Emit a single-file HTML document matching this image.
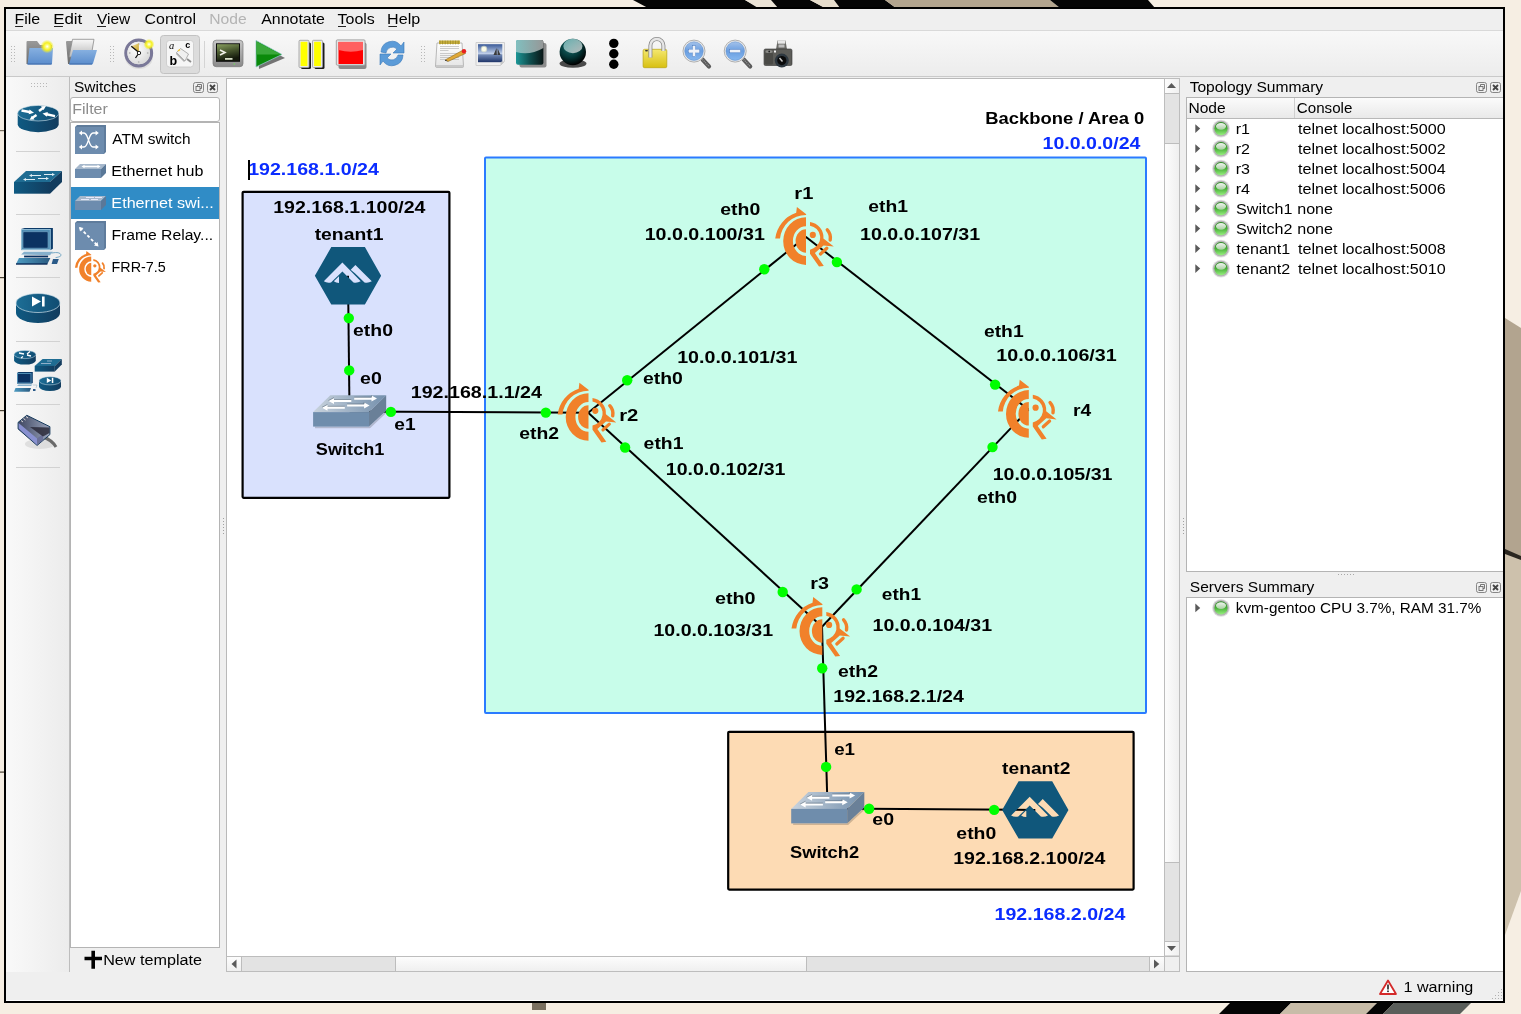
<!DOCTYPE html><html><head><meta charset="utf-8"><style>
html,body{margin:0;padding:0;background:#f6eee3;overflow:hidden;}
svg{display:block;font-family:"Liberation Sans",sans-serif;will-change:transform;}
</style></head><body>
<svg width="1521" height="1014" viewBox="0 0 1521 1014">
<defs>
<linearGradient id="gTool" x1="0" y1="0" x2="0" y2="1"><stop offset="0" stop-color="#f8f8f8"/><stop offset="1" stop-color="#ececec"/></linearGradient>
<linearGradient id="gLeft" x1="0" y1="0" x2="1" y2="0"><stop offset="0" stop-color="#f9f9f9"/><stop offset="1" stop-color="#ececec"/></linearGradient>
<linearGradient id="gHdr" x1="0" y1="0" x2="0" y2="1"><stop offset="0" stop-color="#fbfbfb"/><stop offset="1" stop-color="#e9e9e9"/></linearGradient>
<linearGradient id="gHandleV" x1="0" y1="0" x2="1" y2="0"><stop offset="0" stop-color="#fdfdfd"/><stop offset="1" stop-color="#efefef"/></linearGradient>
<linearGradient id="gHandleH" x1="0" y1="0" x2="0" y2="1"><stop offset="0" stop-color="#fdfdfd"/><stop offset="1" stop-color="#efefef"/></linearGradient>
<linearGradient id="gLed2" x1="0" y1="0" x2="0" y2="1"><stop offset="0" stop-color="#2a8a20"/><stop offset="0.5" stop-color="#48b038"/><stop offset="1" stop-color="#98f080"/></linearGradient><linearGradient id="gLedHi" x1="0" y1="0" x2="0" y2="1"><stop offset="0" stop-color="#f0f4f0"/><stop offset="1" stop-color="#a8d0a0"/></linearGradient>
<linearGradient id="gSwTop" x1="0" y1="0" x2="1" y2="0"><stop offset="0" stop-color="#c9d3dd"/><stop offset="1" stop-color="#7490ad"/></linearGradient>
</defs>
<rect x="0" y="0" width="1521" height="1014" fill="#f6eee3"/>
<polygon points="633,0 745,0 760,8 648,8" fill="#050505"/>
<polygon points="745,0 771,0 778,8 758,8" fill="#ebe3d6"/>
<polygon points="771,0 810,0 825,8 778,8" fill="#050505"/>
<polygon points="810,0 834,0 840,8 825,8" fill="#e6dccb"/>
<polygon points="834,0 885,0 896,8 840,8" fill="#050505"/>
<polygon points="885,0 1050,0 1060,8 896,8" fill="#b3a58e"/>
<polygon points="1050,0 1148,0 1155,8 1060,8" fill="#050505"/>
<polygon points="1505,318 1521,328 1521,558 1505,551" fill="#b2a48f"/>
<polygon points="1505,551 1521,558 1521,891 1505,935" fill="#cdc1ac"/>
<polygon points="1505,549 1521,556 1521,560 1505,554" fill="#2a2620"/>
<polygon points="1230,1003 1291,1003 1280,1014 1219,1014" fill="#050505"/>
<polygon points="1291,1003 1377,1003 1366,1014 1280,1014" fill="#c8bca8"/>
<polygon points="1377,1003 1394,1003 1383,1014 1366,1014" fill="#050505"/>
<polygon points="1394,1003 1471,1003 1460,1014 1383,1014" fill="#5a5e5a"/>
<rect x="532" y="1003" width="14" height="7" fill="#7a7060"/>
<rect x="0" y="130" width="4" height="1.2" fill="#7a7062"/>
<rect x="0" y="277" width="4" height="1.2" fill="#4a4234"/>
<rect x="0" y="410" width="4" height="1.2" fill="#4a4234"/>
<rect x="0" y="771.5" width="4" height="1.2" fill="#4a4234"/>
<rect x="4" y="7" width="1501" height="996" fill="#000"/>
<rect x="6" y="9" width="1497" height="992" fill="#efefef"/>
<rect x="6" y="9" width="1497" height="21" fill="#efefef"/>
<rect x="6" y="30" width="1497" height="1" fill="#d9d9d9"/>
<text x="14.49" y="24.30" font-size="15.0" font-weight="normal" fill="#000" textLength="25.72" lengthAdjust="spacingAndGlyphs" >File</text>
<text x="53.21" y="24.30" font-size="15.0" font-weight="normal" fill="#000" textLength="29.11" lengthAdjust="spacingAndGlyphs" >Edit</text>
<text x="97.03" y="24.30" font-size="15.0" font-weight="normal" fill="#000" textLength="33.23" lengthAdjust="spacingAndGlyphs" >View</text>
<text x="144.59" y="24.30" font-size="15.0" font-weight="normal" fill="#000" textLength="51.48" lengthAdjust="spacingAndGlyphs" >Control</text>
<text x="209.21" y="24.30" font-size="15.0" font-weight="normal" fill="#b4b4b4" textLength="37.48" lengthAdjust="spacingAndGlyphs" >Node</text>
<text x="261.17" y="24.30" font-size="15.0" font-weight="normal" fill="#000" textLength="63.84" lengthAdjust="spacingAndGlyphs" >Annotate</text>
<text x="337.54" y="24.30" font-size="15.0" font-weight="normal" fill="#000" textLength="37.34" lengthAdjust="spacingAndGlyphs" >Tools</text>
<text x="387.08" y="24.30" font-size="15.0" font-weight="normal" fill="#000" textLength="33.10" lengthAdjust="spacingAndGlyphs" >Help</text>
<rect x="15.1" y="26" width="7.9" height="1" fill="#222"/>
<rect x="54" y="26" width="8.9" height="1" fill="#222"/>
<rect x="97" y="26" width="9.0" height="1" fill="#222"/>
<rect x="338" y="26" width="8.0" height="1" fill="#222"/>
<rect x="388.4" y="26" width="8.6" height="1" fill="#222"/>
<rect x="6" y="31" width="1497" height="45" fill="url(#gTool)"/>
<rect x="6" y="76" width="1497" height="1" fill="#c9c9c9"/>
<rect x="11" y="46" width="1" height="1" fill="#b8b8b8"/>
<rect x="11" y="49" width="1" height="1" fill="#b8b8b8"/>
<rect x="11" y="52" width="1" height="1" fill="#b8b8b8"/>
<rect x="11" y="55" width="1" height="1" fill="#b8b8b8"/>
<rect x="11" y="58" width="1" height="1" fill="#b8b8b8"/>
<rect x="11" y="61" width="1" height="1" fill="#b8b8b8"/>
<rect x="14" y="46" width="1" height="1" fill="#b8b8b8"/>
<rect x="14" y="49" width="1" height="1" fill="#b8b8b8"/>
<rect x="14" y="52" width="1" height="1" fill="#b8b8b8"/>
<rect x="14" y="55" width="1" height="1" fill="#b8b8b8"/>
<rect x="14" y="58" width="1" height="1" fill="#b8b8b8"/>
<rect x="14" y="61" width="1" height="1" fill="#b8b8b8"/>
<rect x="110" y="46" width="1" height="1" fill="#b8b8b8"/>
<rect x="110" y="49" width="1" height="1" fill="#b8b8b8"/>
<rect x="110" y="52" width="1" height="1" fill="#b8b8b8"/>
<rect x="110" y="55" width="1" height="1" fill="#b8b8b8"/>
<rect x="110" y="58" width="1" height="1" fill="#b8b8b8"/>
<rect x="110" y="61" width="1" height="1" fill="#b8b8b8"/>
<rect x="113" y="46" width="1" height="1" fill="#b8b8b8"/>
<rect x="113" y="49" width="1" height="1" fill="#b8b8b8"/>
<rect x="113" y="52" width="1" height="1" fill="#b8b8b8"/>
<rect x="113" y="55" width="1" height="1" fill="#b8b8b8"/>
<rect x="113" y="58" width="1" height="1" fill="#b8b8b8"/>
<rect x="113" y="61" width="1" height="1" fill="#b8b8b8"/>
<rect x="421" y="46" width="1" height="1" fill="#b8b8b8"/>
<rect x="421" y="49" width="1" height="1" fill="#b8b8b8"/>
<rect x="421" y="52" width="1" height="1" fill="#b8b8b8"/>
<rect x="421" y="55" width="1" height="1" fill="#b8b8b8"/>
<rect x="421" y="58" width="1" height="1" fill="#b8b8b8"/>
<rect x="421" y="61" width="1" height="1" fill="#b8b8b8"/>
<rect x="424" y="46" width="1" height="1" fill="#b8b8b8"/>
<rect x="424" y="49" width="1" height="1" fill="#b8b8b8"/>
<rect x="424" y="52" width="1" height="1" fill="#b8b8b8"/>
<rect x="424" y="55" width="1" height="1" fill="#b8b8b8"/>
<rect x="424" y="58" width="1" height="1" fill="#b8b8b8"/>
<rect x="424" y="61" width="1" height="1" fill="#b8b8b8"/>
<defs>
<radialGradient id="gGlow"><stop offset="0" stop-color="#ffffff"/><stop offset="0.25" stop-color="#fbfb80"/><stop offset="0.55" stop-color="#f4ef20"/><stop offset="1" stop-color="#f4ef20" stop-opacity="0"/></radialGradient>
<linearGradient id="gFold" x1="0" y1="0" x2="0" y2="1"><stop offset="0" stop-color="#86b0e0"/><stop offset="1" stop-color="#5a8ccc"/></linearGradient>
<linearGradient id="gGreyF" x1="0" y1="0" x2="0" y2="1"><stop offset="0" stop-color="#9a9a9a"/><stop offset="1" stop-color="#6a6a6a"/></linearGradient>
<linearGradient id="gPaper" x1="0" y1="0" x2="0" y2="1"><stop offset="0" stop-color="#f8f8f8"/><stop offset="1" stop-color="#b8b8b8"/></linearGradient>
</defs>
<g>
<path d="M26.5,42 Q26.5,41 27.5,41 H37 L40,45 H52 V64 H26.5 z" fill="url(#gGreyF)"/>
<path d="M29.5,48 H53 L52,63.5 Q52,64.5 51,64.5 H27.5 z" fill="url(#gFold)"/>
<path d="M27.5,64 H51.5" stroke="#3e6aa8" stroke-width="1"/>
<circle cx="47.2" cy="46.5" r="6.8" fill="url(#gGlow)"/>
</g>
<g>
<path d="M66,42 Q66,41 67,41 H74 V64 H68 z" fill="url(#gGreyF)"/>
<path d="M72.5,39.3 H94 L91,57 H69 z" fill="url(#gPaper)" stroke="#8a8a8a" stroke-width="0.8"/>
<path d="M73,50 H97 L93,63.5 Q92.7,64.5 91.5,64.5 H69 z" fill="url(#gFold)"/>
<path d="M69.5,64 H92" stroke="#3e6aa8" stroke-width="1"/>
</g>
<defs>
<radialGradient id="gFace" cx="0.4" cy="0.35" r="0.7"><stop offset="0" stop-color="#ffffff"/><stop offset="1" stop-color="#d8d8d8"/></radialGradient>
<linearGradient id="gWedge" x1="0" y1="0" x2="1" y2="1"><stop offset="0" stop-color="#f0e0a0"/><stop offset="1" stop-color="#c8a020"/></linearGradient>
</defs>
<g>
<ellipse cx="139" cy="57" rx="14" ry="12" fill="#000" opacity="0.08"/>
<circle cx="138.7" cy="53" r="12.9" fill="none" stroke="#7a7898" stroke-width="3.1"/>
<circle cx="138.7" cy="53" r="11.3" fill="url(#gFace)"/>
<circle cx="138.7" cy="44" r="0.9" fill="#bbb"/><circle cx="138.7" cy="62" r="0.9" fill="#bbb"/>
<circle cx="129.7" cy="53" r="0.9" fill="#bbb"/><circle cx="147.7" cy="53" r="0.9" fill="#bbb"/>
<path d="M138.9,52.6 L131.3,46.2 L138.9,43.3 z" fill="url(#gWedge)"/>
<path d="M138.9,52.6 L131.3,46.2 M138.9,53 L135.5,58" stroke="#111" stroke-width="1.3"/>
<circle cx="139" cy="53" r="1.7" fill="#fff" stroke="#111" stroke-width="0.9"/>
<circle cx="149" cy="44.3" r="5.5" fill="url(#gGlow)"/>
</g>
<g>
<rect x="160.5" y="35.5" width="39" height="38" rx="3" fill="#dcdcdc" stroke="#c2c2c2"/>
<rect x="166.5" y="40.5" width="27" height="26.5" rx="3" fill="#f6f6f6" stroke="#c8c8c8" stroke-width="0.8"/>
<text x="169" y="48.8" font-size="10.5" font-style="italic" font-family="Liberation Serif" fill="#000">a</text>
<text x="185.3" y="48.3" font-size="9" font-weight="bold" fill="#000">c</text>
<text x="169.5" y="64.6" font-size="12.5" font-weight="bold" fill="#000">b</text>
<path d="M176.5,52.5 L180.5,48.5 L188.5,54 L185,61 z" fill="#f0f0f0" stroke="#909090" stroke-width="0.7"/>
<path d="M176.5,52.5 L185,61 L184,62 L176,54z" fill="#b0b0b0"/>
<path d="M177.5,50.5 l2,-1.5 l1,1 l-2,1.5z" fill="#f0c030"/>
<path d="M187,59 l4,3" stroke="#8a8a8a" stroke-width="1.8"/>
</g>
<rect x="204" y="41" width="1" height="27" fill="#d4d4d4"/>
<defs>
<linearGradient id="gScr" x1="0" y1="0" x2="0.3" y2="1"><stop offset="0" stop-color="#8aa060"/><stop offset="0.5" stop-color="#4a5a30"/><stop offset="1" stop-color="#141a0c"/></linearGradient>
<linearGradient id="gBez" x1="0" y1="0" x2="0" y2="1"><stop offset="0" stop-color="#c8c8c8"/><stop offset="1" stop-color="#8a8a8a"/></linearGradient>
</defs>
<g>
<rect x="213" y="40.2" width="30" height="26.5" rx="3.2" fill="url(#gBez)" stroke="#7a7a7a" stroke-width="0.7"/>
<rect x="216" y="43.3" width="24" height="18.5" fill="#0a0a0a"/>
<rect x="217" y="44.2" width="22" height="16.5" fill="url(#gScr)"/>
<path d="M220,50 l5,2.5 l-5,2.5" stroke="#f0f0e8" stroke-width="1.6" fill="none"/>
<rect x="225" y="58" width="7.5" height="1.8" fill="#d8e0c8"/>
<rect x="233.5" y="63.3" width="1.6" height="1.4" fill="#7c6"/>
</g>
<g>
<path d="M258,44 L285,58 L259,69 z" fill="#555" opacity="0.8"/>
<path d="M256,40.5 L282,54.5 L256,67 z" fill="#0a8a0a" stroke="#8fc8c8" stroke-width="0.8"/>
<path d="M256.5,41.5 L281,54.5 L256.5,54.5 z" fill="#3aa83a"/>
</g>
<g>
<rect x="301" y="42.5" width="10" height="26.5" rx="1.5" fill="#1a1a1a"/>
<rect x="314.5" y="42.5" width="10" height="26.5" rx="1.5" fill="#1a1a1a"/>
<rect x="299" y="40.3" width="10" height="27.2" rx="1" fill="#e8e8e8" stroke="#9a9a9a" stroke-width="0.8"/>
<rect x="300.6" y="41.8" width="6.8" height="24.2" fill="#ffff00"/>
<rect x="312.5" y="40.3" width="10" height="27.2" rx="1" fill="#e8e8e8" stroke="#9a9a9a" stroke-width="0.8"/>
<rect x="314.1" y="41.8" width="6.8" height="24.2" fill="#ffff00"/>
</g>
<g>
<rect x="338.5" y="42.5" width="28" height="26.5" rx="2" fill="#8a8a8a"/>
<rect x="336.3" y="39.9" width="28.7" height="25.3" rx="1" fill="#e6e6e6" stroke="#9a9a9a" stroke-width="0.9"/>
<rect x="338.5" y="41.9" width="24.5" height="22.1" fill="#ff0000"/>
<path d="M338.5,41.9 h24.5 v8 q-12.25,3.5 -24.5,0 z" fill="#ff6060"/>
</g>
<g fill="#5b9bd8" stroke="#3a78b8" stroke-width="0.6">
<path d="M381,52 A11,11 0 0 1 401,46 L404,42 L404,53 L393,53 L397,49 A6.5,6.5 0 0 0 386,53 z"/>
<path d="M403,55 A11,11 0 0 1 383,61 L380,65 L380,54 L391,54 L387,58 A6.5,6.5 0 0 0 398,55 z"/>
</g>
<defs>
<linearGradient id="gSky" x1="0" y1="0" x2="0" y2="1"><stop offset="0" stop-color="#3a5a98"/><stop offset="1" stop-color="#c8d6ee"/></linearGradient>
<linearGradient id="gSea" x1="0" y1="0" x2="0" y2="1"><stop offset="0" stop-color="#7890bc"/><stop offset="1" stop-color="#1e3468"/></linearGradient>
<linearGradient id="gPad" x1="0" y1="0" x2="0" y2="1"><stop offset="0" stop-color="#ffffff"/><stop offset="1" stop-color="#e4e4e4"/></linearGradient>
</defs>
<g>
<path d="M437,43 H462 L463.5,66 Q463.5,67.5 462,67.5 H437 Q435.5,67.5 435.5,66 z" fill="url(#gPad)" stroke="#a8a8a8" stroke-width="0.8"/>
<rect x="436" y="65" width="27.5" height="2.5" fill="#c8c8c8"/>
<rect x="439" y="40.5" width="21" height="3.5" fill="#c8b040"/>
<path d="M440,40.5 v4 M442.6,40.5 v4 M445.2,40.5 v4 M447.8,40.5 v4 M450.4,40.5 v4 M453,40.5 v4 M455.6,40.5 v4 M458.2,40.5 v4" stroke="#8a7a20" stroke-width="0.6"/>
<path d="M440,46.5 h19 M440,48.5 h19 M440,50.5 h8.5 M440,53.5 h19 M440,55.5 h19 M440,57.5 h19 M440,59.5 h19" stroke="#b8b8b8" stroke-width="0.7"/>
<path d="M445.5,59.8 L463,50 L465.5,53.5 L448,61.5 z" fill="#e0a838" stroke="#7a5a10" stroke-width="0.5"/>
<path d="M445.5,59.8 L448,61.5 L444.8,60.8z" fill="#333"/>
<circle cx="464" cy="51.3" r="2.2" fill="#e82020"/>
</g>
<g>
<path d="M476,42.5 h28.5 v19 l-4,4 h-24.5 z" fill="#f0f0f0" stroke="#cfcfcf"/>
<rect x="478" y="44.2" width="24.3" height="10" fill="url(#gSky)"/>
<rect x="478" y="54.2" width="24.3" height="8" fill="url(#gSea)"/>
<circle cx="484" cy="49" r="3.2" fill="#f8f8d0" opacity="0.6"/>
<circle cx="484" cy="49" r="2.3" fill="#fbfbe8"/>
<path d="M493.5,55 l3,-7 l0.4,7z M497.5,55 l0.2,-6.5 l2.8,6.5z" fill="#3a3a3a"/>
<path d="M500.5,65.5 l4,-4 h-3 l-1,1z" fill="#c8c8c8"/>
</g>
<defs>
<linearGradient id="gTeal" x1="0" y1="0" x2="1" y2="0"><stop offset="0" stop-color="#1c9696"/><stop offset="0.5" stop-color="#0f4f4f"/><stop offset="1" stop-color="#0a1616"/></linearGradient>
<linearGradient id="gTealHi" x1="0" y1="0" x2="1" y2="0"><stop offset="0" stop-color="#8cc4c4"/><stop offset="1" stop-color="#a6a6a6"/></linearGradient>
<radialGradient id="gSph" cx="0.4" cy="0.3" r="0.7"><stop offset="0" stop-color="#1a7070"/><stop offset="0.6" stop-color="#033434"/><stop offset="1" stop-color="#000"/></radialGradient>
<linearGradient id="gSphHi" x1="0" y1="0" x2="1" y2="1"><stop offset="0" stop-color="#70b8b8"/><stop offset="1" stop-color="#c8c8c8"/></linearGradient>
</defs>
<g>
<rect x="519.5" y="43" width="27" height="24.5" rx="2" fill="#8c8c8c"/>
<rect x="516" y="40" width="27.4" height="24.8" rx="2" fill="url(#gTeal)"/>
<path d="M516,52 Q529.7,56 543.4,48 V42 Q543.4,40 541.4,40 H518 Q516,40 516,42 z" fill="url(#gTealHi)" opacity="0.9"/>
</g>
<g>
<ellipse cx="573" cy="63.5" rx="13.5" ry="4.3" fill="#4a4a4a"/>
<circle cx="572.8" cy="52" r="13.2" fill="url(#gSph)"/>
<ellipse cx="572.9" cy="46" rx="9.6" ry="7.2" fill="url(#gSphHi)" opacity="0.9"/>
</g>
<circle cx="613.8" cy="43.4" r="4.7" fill="#000"/>
<circle cx="613.8" cy="53.8" r="4.7" fill="#000"/>
<circle cx="613.8" cy="64.2" r="4.7" fill="#000"/>
<defs>
<linearGradient id="gLock" x1="0" y1="0" x2="0" y2="1"><stop offset="0" stop-color="#f4e870"/><stop offset="1" stop-color="#d8c010"/></linearGradient>
<linearGradient id="gLens" x1="0" y1="0" x2="0" y2="1"><stop offset="0" stop-color="#a4c2ea"/><stop offset="0.5" stop-color="#6a9ee0"/><stop offset="1" stop-color="#86b8f0"/></linearGradient>
</defs>
<g>
<rect x="643.1" y="49.3" width="23.7" height="18.4" rx="1.5" fill="url(#gLock)" stroke="#b8a410" stroke-width="0.7"/>
<ellipse cx="646.5" cy="50.8" rx="1.6" ry="0.8" fill="#333"/>
<path d="M650.4,57.5 V45.5 A6.5,6.5 0 0 1 663.4,45.5 V51" fill="none" stroke="#8a8a8a" stroke-width="4"/>
<path d="M650.4,57.5 V45.5 A6.5,6.5 0 0 1 663.4,45.5 V51" fill="none" stroke="#e6e6e6" stroke-width="2.4"/>
</g>
<g>
<path d="M702.5,59.5 L709,66.5" stroke="#5a5a5a" stroke-width="4.2" stroke-linecap="round"/>
<path d="M702.5,59.5 L709,66.5" stroke="#9a9a9a" stroke-width="1.2" stroke-dasharray="1,1"/>
<circle cx="694" cy="51.1" r="11" fill="#ececec" stroke="#b0b0b0" stroke-width="1"/>
<circle cx="694" cy="51.1" r="9.3" fill="url(#gLens)" stroke="#5a8ac8" stroke-width="0.5"/>
<rect x="688.5" y="49.4" width="11" height="3.4" fill="#eef2f8" stroke="#4a7ac0" stroke-width="0.5"/>
<rect x="692.3" y="45.6" width="3.4" height="11" fill="#eef2f8" stroke="#4a7ac0" stroke-width="0.5"/><rect x="688.8" y="49.7" width="10.4" height="2.8" fill="#eef2f8"/></g>
<g>
<path d="M743.7,59.5 L750.2,66.5" stroke="#5a5a5a" stroke-width="4.2" stroke-linecap="round"/>
<path d="M743.7,59.5 L750.2,66.5" stroke="#9a9a9a" stroke-width="1.2" stroke-dasharray="1,1"/>
<circle cx="735.2" cy="51.1" r="11" fill="#ececec" stroke="#b0b0b0" stroke-width="1"/>
<circle cx="735.2" cy="51.1" r="9.3" fill="url(#gLens)" stroke="#5a8ac8" stroke-width="0.5"/>
<rect x="729.7" y="49.4" width="11" height="3.4" fill="#eef2f8" stroke="#4a7ac0" stroke-width="0.5"/>
</g>
<g>
<path d="M777.5,40.5 h8 l1.5,9 h-11z" fill="#6a6a66"/>
<rect x="777.8" y="40.3" width="7.4" height="3.4" fill="#e8e8e8"/>
<rect x="778.5" y="44.5" width="6" height="3" fill="#bdbdbd"/>
<path d="M764,50.5 Q764,49 765.5,49 H790.5 Q792,49 792,50.5 V64 Q792,65.5 790.5,65.5 H765.5 Q764,65.5 764,64z" fill="#5c5c58" stroke="#333" stroke-width="0.6"/>
<rect x="765" y="52.5" width="8" height="12" rx="1.5" fill="#4a4a46"/>
<ellipse cx="769" cy="51.5" rx="3.5" ry="1.6" fill="#8a8a86"/>
<circle cx="769.2" cy="51.5" r="0.9" fill="#222"/>
<rect x="774" y="50.5" width="2" height="2" fill="#f4f4f4"/>
<circle cx="781.8" cy="60.6" r="7" fill="#2e3840"/>
<circle cx="781.8" cy="60.6" r="4.6" fill="#0a0a0a"/>
<path d="M779.5,58 l3,3.5" stroke="#c8c8c8" stroke-width="1.5"/>
</g>
<rect x="6" y="77" width="63" height="895" fill="url(#gLeft)"/>
<rect x="31" y="83" width="1" height="1" fill="#b8b8b8"/>
<rect x="34" y="83" width="1" height="1" fill="#b8b8b8"/>
<rect x="37" y="83" width="1" height="1" fill="#b8b8b8"/>
<rect x="40" y="83" width="1" height="1" fill="#b8b8b8"/>
<rect x="43" y="83" width="1" height="1" fill="#b8b8b8"/>
<rect x="46" y="83" width="1" height="1" fill="#b8b8b8"/>
<rect x="31" y="86" width="1" height="1" fill="#b8b8b8"/>
<rect x="34" y="86" width="1" height="1" fill="#b8b8b8"/>
<rect x="37" y="86" width="1" height="1" fill="#b8b8b8"/>
<rect x="40" y="86" width="1" height="1" fill="#b8b8b8"/>
<rect x="43" y="86" width="1" height="1" fill="#b8b8b8"/>
<rect x="46" y="86" width="1" height="1" fill="#b8b8b8"/>
<rect x="16" y="151" width="44" height="1" fill="#d2d2d2"/>
<rect x="16" y="214" width="44" height="1" fill="#d2d2d2"/>
<rect x="16" y="277" width="44" height="1" fill="#d2d2d2"/>
<rect x="16" y="341" width="44" height="1" fill="#d2d2d2"/>
<rect x="16" y="404" width="44" height="1" fill="#d2d2d2"/>
<rect x="16" y="467" width="44" height="1" fill="#d2d2d2"/>
<defs>
<linearGradient id="gDev" x1="0" y1="0" x2="1" y2="0"><stop offset="0" stop-color="#0f5a82"/><stop offset="1" stop-color="#123c5e"/></linearGradient>
<linearGradient id="gDevTop" x1="0" y1="0" x2="1" y2="0"><stop offset="0" stop-color="#1d6e96"/><stop offset="1" stop-color="#0f4c72"/></linearGradient>
</defs>
<g>
<path d="M17.7,113.2 v11 A20.5,8 0 0 0 58.7,124.2 V113.2 z" fill="url(#gDev)"/>
<ellipse cx="38.2" cy="113.2" rx="20.5" ry="7.8" fill="url(#gDevTop)" stroke="#cfe0ea" stroke-width="0.6"/>
<path d="M21.5,110.5 L31,112.2" stroke="#fff" stroke-width="2.4"/><path d="M34,112.8 l-4.5,-3.2 l-0.8,4.6z" fill="#fff"/>
<path d="M39,111 L43,108" stroke="#fff" stroke-width="2.4"/><path d="M46,106 l-5,0.2 l2.6,3.8z" fill="#fff"/>
<path d="M55,116.2 L45.5,114" stroke="#fff" stroke-width="2.4"/><path d="M42.5,113.5 l4.5,3.2 l0.8,-4.6z" fill="#fff"/>
<path d="M36.5,115 L32,118" stroke="#fff" stroke-width="2.4"/><path d="M29.5,119.8 l5,-0.2 l-2.6,-3.8z" fill="#fff"/>
</g>
<g>
<path d="M14,182 L26,171 H62 L50,182 z" fill="#1f6c92"/>
<rect x="14" y="182" width="36" height="11.7" fill="url(#gDev)"/>
<path d="M50,182 L62,171 V182 L50,193.7 z" fill="#123c5e"/>
<path d="M25,179.5 h10 M31,175.5 h10 M38,178.5 h9 M44,174.5 h9" stroke="#e0eef5" stroke-width="1.1"/><path d="M23,179.5 l3,-1.5 v3z M29,175.5 l3,-1.5 v3z M49,178.5 l-3,-1.5 v3z M55,174.5 l-3,-1.5 v3z" fill="#e0eef5"/>
</g>
<defs><linearGradient id="gKb" x1="0" y1="0" x2="1" y2="0"><stop offset="0" stop-color="#4e9cc2"/><stop offset="1" stop-color="#2a5a80"/></linearGradient></defs>
<g>
<path d="M24.6,227.9 H52.9 V248.8 L50.7,250.1 H21.1 V229 z" fill="#0c3a68"/>
<rect x="21.1" y="229" width="29.6" height="21.1" fill="#4f8db4"/>
<rect x="21.6" y="229.5" width="28.6" height="20.1" fill="none" stroke="#a8cce0" stroke-width="0.7"/>
<rect x="23" y="231.7" width="25" height="16.5" rx="1" fill="#0b3262" stroke="#7aa8c8" stroke-width="0.6"/>
<path d="M21.1,254.5 L24,251.7 H52.9 L50,255.3 z" fill="#86b0cc"/>
<rect x="24.1" y="255.6" width="24" height="1.8" fill="#0a3060"/>
<path d="M19,258 H50.4 L47.4,264 H16 z" fill="url(#gKb)"/>
<rect x="16" y="263.3" width="31.4" height="1.4" fill="#0a2a58"/>
<path d="M53,259 h5.8 l-1.8,5 h-5.4 z" fill="#2a5a88"/>
<path d="M51.8,253 q8,-1.5 9.2,1.8 q0.5,2 -5.4,2.8" fill="none" stroke="#6aa0c0" stroke-width="0.9"/>
</g>
<g>
<path d="M16,303 v10 A22,10 0 0 0 60,313 V303 z" fill="url(#gDev)"/>
<ellipse cx="38" cy="303" rx="22" ry="9.5" fill="url(#gDevTop)" stroke="#cfe0ea" stroke-width="0.7"/>
<path d="M32,296.5 l9,5 l-9,5z" fill="#fff"/>
<rect x="42" y="296.5" width="2.6" height="10" fill="#fff"/>
</g>
<g>
<path d="M14.1,354.5 v6 A10.85,4.1 0 0 0 35.8,360.5 V354.5z" fill="url(#gDev)"/>
<ellipse cx="25" cy="354.5" rx="10.85" ry="4.1" fill="url(#gDevTop)" stroke="#cfe0ea" stroke-width="0.5"/>
<path d="M19,353 l5,1 M27,354 l3,-2.5 M31,356 l-4,-1 M23,356.5 l-2,1.5" stroke="#fff" stroke-width="1.3"/>
<path d="M34.7,365.9 L42.6,359.1 H61.8 L54.8,365.9z" fill="#1f6c92"/>
<rect x="34.7" y="365.9" width="20.1" height="5.7" fill="url(#gDev)"/>
<path d="M54.8,365.9 L61.8,359.1 V364.5 L54.8,371.6z" fill="#123c5e"/>
<path d="M41,363.5 h5 M47,361 h5 M46,363.5 h5" stroke="#dde" stroke-width="0.6"/>
<path d="M18.5,372.1 H32.8 V383 L31.5,383.5 H17 V373z" fill="#0c3a68"/>
<rect x="17" y="373" width="14.5" height="10.5" fill="#4f8db4"/>
<rect x="18" y="374" width="12.5" height="8.5" fill="#0b3262"/>
<path d="M17,386 l1.5,-1.5 h14 l-1.5,1.5z" fill="#86b0cc"/>
<path d="M15.5,387.9 H31 L29.5,391.7 H14z" fill="url(#gKb)"/>
<path d="M33,385 h4 l-1,3" fill="none" stroke="#8ab" stroke-width="0.5"/>
<rect x="33" y="389" width="2.5" height="2" fill="#2a5a88"/>
<path d="M39,380.8 v6 A11,4.1 0 0 0 61,386.8 V380.8z" fill="url(#gDev)"/>
<ellipse cx="50" cy="380.8" rx="11" ry="4.1" fill="url(#gDevTop)" stroke="#cfe0ea" stroke-width="0.5"/>
<path d="M46.8,377.8 l4.5,2.6 l-4.5,2.6z" fill="#fff"/>
<rect x="51.8" y="377.8" width="1.5" height="5.2" fill="#fff"/>
</g>
<defs><linearGradient id="gCab" x1="0" y1="0" x2="1" y2="0"><stop offset="0" stop-color="#3e4660"/><stop offset="1" stop-color="#9aa4bc"/></linearGradient></defs>
<g>
<ellipse cx="40" cy="444" rx="15" ry="5" fill="#d0d0d0" opacity="0.6"/>
<path d="M43,437 q9,3 13,10" stroke="#6a6a6a" stroke-width="3" fill="none"/>
<path d="M18.1,422.4 L26.8,415.3 L49.9,426.7 V434.6 L37.1,445.4 L18.1,428.9 z" fill="url(#gCab)" stroke="#163a5c" stroke-width="1"/>
<path d="M18.6,423 L37.1,438.6 V445 L18.6,428.6 z" fill="#8890d0"/>
<path d="M37.1,438.6 L43,434 V440.3 L37.1,445 z" fill="#6a7098"/>
<path d="M30,427 L49.5,427.5 V433 L43,436.5 z" fill="#2c2a3a" opacity="0.85"/>
<path d="M21,420.5 l2,1.5 M23.5,418.5 l2,1.5 M26,416.5 l2,1.5" stroke="#ddd" stroke-width="1"/>
</g>
<rect x="69" y="77" width="1" height="895" fill="#bdbdbd"/>
<text x="73.90" y="92.00" font-size="14.9" font-weight="normal" fill="#000" textLength="62.06" lengthAdjust="spacingAndGlyphs" >Switches</text>
<rect x="193.5" y="82.5" width="10" height="10" rx="2" fill="none" stroke="#7a7a7a" stroke-width="0.9"/>
<rect x="196" y="86.5" width="4" height="4" fill="none" stroke="#6a6a6a" stroke-width="0.9"/>
<path d="M197.5,86.5 v-2 h4 v4 h-1.5" fill="none" stroke="#6a6a6a" stroke-width="0.9"/>
<rect x="207.5" y="82.5" width="10" height="10" rx="2" fill="none" stroke="#7a7a7a" stroke-width="0.9"/>
<path d="M210,85 l5,5 M215,85 l-5,5" stroke="#444" stroke-width="1.8"/>
<rect x="70.5" y="97.5" width="149" height="24" rx="2.5" fill="#fff" stroke="#b4b4b4"/>
<text x="72.29" y="113.90" font-size="14.9" font-weight="normal" fill="#8c8c8c" textLength="35.58" lengthAdjust="spacingAndGlyphs" >Filter</text>
<rect x="70.5" y="122.5" width="149" height="825" fill="#fff" stroke="#b4b4b4"/>
<rect x="71" y="187" width="148" height="32" fill="#308cc6"/>
<g>
<path d="M75,127 l2,-2 h29 v27 l-2,2 h-29z" fill="#5f7c9c"/>
<rect x="75" y="127" width="29" height="27" rx="1" fill="#6d8cae"/>
<path d="M81,133 H84 C88.5,133 88.5,147 93,147 H96.5 M96.5,133 H93 C88.5,133 88.5,147 84,147 H81" stroke="#fff" stroke-width="1.3" fill="none"/>
<path d="M78.8,133 l3.2,-2.6 v5.2z M98.8,133 l-3.2,-2.6 v5.2z M78.8,147 l3.2,-2.6 v5.2z M98.8,147 l-3.2,-2.6 v5.2z" fill="#fff"/>
</g>
<path d="M75,169 L80,164 H106 L101,169z" fill="#a6b8cc"/>
<rect x="75" y="169" width="26" height="9" fill="#6d8cae"/>
<path d="M101,169 L106,164 V173 L101,178z" fill="#5a7898"/>
<path d="M84,166.5 h14" stroke="#fff" stroke-width="1.6"/>
<path d="M81.5,166.5 l3,-1.8 v3.6z M100.5,166.5 l-3,-1.8 v3.6z" fill="#fff"/>
<path d="M75,201 L80,196 H106 L101,201z" fill="#a6b8cc"/>
<rect x="75" y="201" width="26" height="9" fill="#6d8cae"/>
<path d="M101,201 L106,196 V205 L101,210z" fill="#5a7898"/>
<path d="M81,199.5 h8 M86,197.5 h8 M91,199.5 h7 M95,197.5 h7" stroke="#eef" stroke-width="0.9"/>
<g>
<path d="M75,223 l2,-2 h29 v27 l-2,2 h-29z" fill="#5f7c9c"/>
<rect x="75" y="223" width="29" height="27" rx="1" fill="#6d8cae"/>
<path d="M80,228 L97.5,245.5" stroke="#fff" stroke-width="1.8" stroke-dasharray="3,2.2"/><path d="M79,227 l4.5,1 l-3.5,3.5z M98.5,246.5 l-4.5,-1 l3.5,-3.5z" fill="#fff"/>
</g>
<defs>
<g id="frr" fill="#f1812a">
<path d="M0.2,31.6 A31,31 0 0 1 21.2,5.8 L21.9,-0.1 L31.3,7.2 L30.9,7.9 A26,26 0 0 0 5,31.6 Z"/>
<path d="M31,10.3 A22.8,23.8 0 0 0 31,57.9 L31,48.9 A13.1,14.85 0 0 1 31,19.2 Z"/>
<path d="M31,22.3 A10.4,11.75 0 0 0 31,45.8 Z"/>
<path d="M35,15 A15.5,15.5 0 0 1 48.4,31.4 L58.8,39.6 L48.5,38.5 L39.9,46.1 L48.8,58.9 L44,59.6 L35,46.8 L35,42.7 L38.5,41.3 A12,12 0 0 0 35,18.7 Z"/>
<circle cx="37.8" cy="27.9" r="3.1"/>
<path d="M45.5,47 L51.8,41.2" stroke="#f1812a" stroke-width="3.2" stroke-linecap="round"/>
<path d="M52.3,22.8 Q56.2,27 55.2,33" stroke="#f1812a" stroke-width="3.4" fill="none" stroke-linecap="round"/>
</g>
<path id="alp" fill="#10577b" fill-rule="evenodd" d="M-33.15,0 L-16.7,-28.7 L16.9,-28.7 L33.15,0 L16.9,28.7 L-16.7,28.7 Z
 M-24.2,5.5 L-5.6,-13.2 L12.7,5.5 Q9,7.6 5.5,6.6 L-5.6,-4.4 L-17,6.6 Q-21,7.6 -24.2,5.5 Z
 M2.7,-6 L7.4,-10.8 L23.8,5.5 Q20,7.6 16.5,6.6 L7.2,-2.3 Z
 M-14.2,5.5 L-9,0.4 L-9,7.1 Q-12,7.1 -14.2,5.5 Z"/>
<g id="sw">
<path d="M-34.5,15 H19.5 L36.7,-0.5 V1.5 L20.5,16.6 H-34.5z" fill="#000" opacity="0.18"/>
<path d="M-36.4,0.5 L-19.2,-16.3 H36.7 L19.5,0.5 z" fill="url(#gSwTop)"/>
<rect x="-36.4" y="0.5" width="55.9" height="14.5" fill="#6f8dac"/>
<path d="M19.5,0.5 L36.7,-16.3 V-0.8 L19.5,15 z" fill="#6a8098"/>
<path d="M-21,-10.7 l5.5,-3 v1.9 h17.3 v2.2 h-17.3 v1.9 z" fill="#fff"/><path d="M-15.5,-14.0 l-5.5,2.9 M-15.5,-12.1 h17.3" stroke="#3a4a5a" stroke-width="0.6" opacity="0.7" fill="none"/><path d="M27.5,-13 l-5.5,-3 v1.9 h-17.3 v2.2 h17.3 v1.9 z" fill="#fff"/><path d="M4.7,-14.4 h17.3 l0,-1.9" stroke="#3a4a5a" stroke-width="0.6" opacity="0.7" fill="none"/><path d="M-27.5,-3.9 l5.5,-3 v1.9 h17.3 v2.2 h-17.3 v1.9 z" fill="#fff"/><path d="M-22.0,-7.199999999999999 l-5.5,2.9 M-22.0,-5.3 h17.3" stroke="#3a4a5a" stroke-width="0.6" opacity="0.7" fill="none"/><path d="M20.1,-6.2 l-5.5,-3 v1.9 h-17.0 v2.2 h17.0 v1.9 z" fill="#fff"/><path d="M-2.4,-7.6 h17.0 l0,-1.9" stroke="#3a4a5a" stroke-width="0.6" opacity="0.7" fill="none"/>
</g>
</defs>
<rect x="226" y="78" width="954" height="894" fill="#efefef"/>
<rect x="226.5" y="78.5" width="953" height="893" fill="#fff" stroke="#b9b9b9"/>
<rect x="242.6" y="191.8" width="206.8" height="306" rx="1" fill="#d9e1fd" stroke="#000" stroke-width="2.2"/>
<rect x="485" y="157.5" width="661" height="555.5" rx="1" fill="#c8fdea" stroke="#2a7bff" stroke-width="2"/>
<rect x="728.2" y="731.8" width="405.4" height="157.8" rx="1" fill="#fddbb4" stroke="#000" stroke-width="2.2"/>
<line x1="348.0" y1="275.8" x2="349.5" y2="411.6" stroke="#000" stroke-width="2"/>
<line x1="349.5" y1="411.6" x2="588.2" y2="412.7" stroke="#000" stroke-width="2"/>
<line x1="588.2" y1="412.7" x2="805.7" y2="236.8" stroke="#000" stroke-width="2"/>
<line x1="805.7" y1="236.8" x2="1028.5" y2="409.6" stroke="#000" stroke-width="2"/>
<line x1="588.2" y1="412.7" x2="822.0" y2="626.8" stroke="#000" stroke-width="2"/>
<line x1="1028.5" y1="409.6" x2="822.0" y2="626.8" stroke="#000" stroke-width="2"/>
<line x1="822.0" y1="626.8" x2="827.6" y2="808.4" stroke="#000" stroke-width="2"/>
<line x1="827.6" y1="808.4" x2="1035.3" y2="809.9" stroke="#000" stroke-width="2"/>
<use href="#frr" x="775.00" y="207.00"/>
<use href="#frr" x="557.50" y="382.90"/>
<use href="#frr" x="791.30" y="597.00"/>
<use href="#frr" x="997.80" y="379.80"/>
<use href="#alp" x="348.0" y="275.8"/>
<use href="#alp" x="1035.3" y="809.9"/>
<use href="#sw" x="349.5" y="411.6"/>
<use href="#sw" x="827.6" y="808.4"/>
<circle cx="348.8" cy="318.1" r="5.2" fill="#00ff00"/>
<circle cx="349.2" cy="370.4" r="5.2" fill="#00ff00"/>
<circle cx="390.9" cy="411.9" r="5.2" fill="#00ff00"/>
<circle cx="545.8" cy="412.6" r="5.2" fill="#00ff00"/>
<circle cx="627.2" cy="380.2" r="5.2" fill="#00ff00"/>
<circle cx="625.1" cy="447.5" r="5.2" fill="#00ff00"/>
<circle cx="764.3" cy="269.2" r="5.2" fill="#00ff00"/>
<circle cx="836.9" cy="262.1" r="5.2" fill="#00ff00"/>
<circle cx="995.1" cy="384.6" r="5.2" fill="#00ff00"/>
<circle cx="992.5" cy="447.1" r="5.2" fill="#00ff00"/>
<circle cx="782.7" cy="592.0" r="5.2" fill="#00ff00"/>
<circle cx="856.6" cy="589.4" r="5.2" fill="#00ff00"/>
<circle cx="822.2" cy="668.2" r="5.2" fill="#00ff00"/>
<circle cx="826.1" cy="766.9" r="5.2" fill="#00ff00"/>
<circle cx="869.1" cy="808.7" r="5.2" fill="#00ff00"/>
<circle cx="994.2" cy="809.9" r="5.2" fill="#00ff00"/>
<text x="248.17" y="175.30" font-size="15.75" font-weight="bold" fill="#0a2cff" textLength="130.74" lengthAdjust="spacingAndGlyphs" >192.168.1.0/24</text>
<rect x="248" y="160" width="2" height="20" fill="#000"/>
<text x="273.17" y="213.20" font-size="15.75" font-weight="bold" fill="#000" textLength="152.34" lengthAdjust="spacingAndGlyphs" >192.168.1.100/24</text>
<text x="314.66" y="239.70" font-size="15.75" font-weight="bold" fill="#000" textLength="68.77" lengthAdjust="spacingAndGlyphs" >tenant1</text>
<text x="353.04" y="335.70" font-size="15.75" font-weight="bold" fill="#000" textLength="39.96" lengthAdjust="spacingAndGlyphs" >eth0</text>
<text x="360.04" y="383.70" font-size="15.75" font-weight="bold" fill="#000" textLength="21.77" lengthAdjust="spacingAndGlyphs" >e0</text>
<text x="394.25" y="429.70" font-size="15.75" font-weight="bold" fill="#000" textLength="21.28" lengthAdjust="spacingAndGlyphs" >e1</text>
<text x="315.88" y="454.70" font-size="15.75" font-weight="bold" fill="#000" textLength="68.53" lengthAdjust="spacingAndGlyphs" >Switch1</text>
<text x="410.76" y="398.00" font-size="15.75" font-weight="bold" fill="#000" textLength="131.14" lengthAdjust="spacingAndGlyphs" >192.168.1.1/24</text>
<text x="519.24" y="439.00" font-size="15.75" font-weight="bold" fill="#000" textLength="39.83" lengthAdjust="spacingAndGlyphs" >eth2</text>
<text x="619.16" y="421.00" font-size="15.75" font-weight="bold" fill="#000" textLength="19.15" lengthAdjust="spacingAndGlyphs" >r2</text>
<text x="642.94" y="384.40" font-size="15.75" font-weight="bold" fill="#000" textLength="39.96" lengthAdjust="spacingAndGlyphs" >eth0</text>
<text x="677.16" y="362.90" font-size="15.75" font-weight="bold" fill="#000" textLength="120.18" lengthAdjust="spacingAndGlyphs" >10.0.0.101/31</text>
<text x="643.64" y="448.70" font-size="15.75" font-weight="bold" fill="#000" textLength="39.79" lengthAdjust="spacingAndGlyphs" >eth1</text>
<text x="665.77" y="475.40" font-size="15.75" font-weight="bold" fill="#000" textLength="119.68" lengthAdjust="spacingAndGlyphs" >10.0.0.102/31</text>
<text x="794.38" y="198.90" font-size="15.75" font-weight="bold" fill="#000" textLength="18.98" lengthAdjust="spacingAndGlyphs" >r1</text>
<text x="720.24" y="215.00" font-size="15.75" font-weight="bold" fill="#000" textLength="40.06" lengthAdjust="spacingAndGlyphs" >eth0</text>
<text x="644.66" y="239.60" font-size="15.75" font-weight="bold" fill="#000" textLength="120.18" lengthAdjust="spacingAndGlyphs" >10.0.0.100/31</text>
<text x="868.35" y="212.00" font-size="15.75" font-weight="bold" fill="#000" textLength="39.69" lengthAdjust="spacingAndGlyphs" >eth1</text>
<text x="860.06" y="239.60" font-size="15.75" font-weight="bold" fill="#000" textLength="120.08" lengthAdjust="spacingAndGlyphs" >10.0.0.107/31</text>
<text x="985.27" y="124.00" font-size="15.75" font-weight="bold" fill="#000" textLength="158.99" lengthAdjust="spacingAndGlyphs" >Backbone / Area 0</text>
<text x="1042.57" y="148.80" font-size="15.75" font-weight="bold" fill="#0a2cff" textLength="97.84" lengthAdjust="spacingAndGlyphs" >10.0.0.0/24</text>
<text x="983.95" y="337.00" font-size="15.75" font-weight="bold" fill="#000" textLength="39.69" lengthAdjust="spacingAndGlyphs" >eth1</text>
<text x="996.26" y="360.90" font-size="15.75" font-weight="bold" fill="#000" textLength="120.49" lengthAdjust="spacingAndGlyphs" >10.0.0.106/31</text>
<text x="1073.13" y="416.10" font-size="15.75" font-weight="bold" fill="#000" textLength="18.17" lengthAdjust="spacingAndGlyphs" >r4</text>
<text x="992.67" y="480.00" font-size="15.75" font-weight="bold" fill="#000" textLength="119.78" lengthAdjust="spacingAndGlyphs" >10.0.0.105/31</text>
<text x="977.04" y="503.30" font-size="15.75" font-weight="bold" fill="#000" textLength="39.96" lengthAdjust="spacingAndGlyphs" >eth0</text>
<text x="810.30" y="589.40" font-size="15.75" font-weight="bold" fill="#000" textLength="18.61" lengthAdjust="spacingAndGlyphs" >r3</text>
<text x="714.93" y="604.30" font-size="15.75" font-weight="bold" fill="#000" textLength="40.68" lengthAdjust="spacingAndGlyphs" >eth0</text>
<text x="653.47" y="635.80" font-size="15.75" font-weight="bold" fill="#000" textLength="119.58" lengthAdjust="spacingAndGlyphs" >10.0.0.103/31</text>
<text x="881.86" y="600.30" font-size="15.75" font-weight="bold" fill="#000" textLength="39.17" lengthAdjust="spacingAndGlyphs" >eth1</text>
<text x="872.57" y="631.10" font-size="15.75" font-weight="bold" fill="#000" textLength="119.47" lengthAdjust="spacingAndGlyphs" >10.0.0.104/31</text>
<text x="838.04" y="677.20" font-size="15.75" font-weight="bold" fill="#000" textLength="39.94" lengthAdjust="spacingAndGlyphs" >eth2</text>
<text x="833.37" y="701.80" font-size="15.75" font-weight="bold" fill="#000" textLength="130.54" lengthAdjust="spacingAndGlyphs" >192.168.2.1/24</text>
<text x="834.17" y="754.70" font-size="15.75" font-weight="bold" fill="#000" textLength="20.85" lengthAdjust="spacingAndGlyphs" >e1</text>
<text x="1002.07" y="773.90" font-size="15.75" font-weight="bold" fill="#000" textLength="68.40" lengthAdjust="spacingAndGlyphs" >tenant2</text>
<text x="872.34" y="825.40" font-size="15.75" font-weight="bold" fill="#000" textLength="21.77" lengthAdjust="spacingAndGlyphs" >e0</text>
<text x="956.34" y="838.60" font-size="15.75" font-weight="bold" fill="#000" textLength="39.96" lengthAdjust="spacingAndGlyphs" >eth0</text>
<text x="789.97" y="858.10" font-size="15.75" font-weight="bold" fill="#000" textLength="69.16" lengthAdjust="spacingAndGlyphs" >Switch2</text>
<text x="953.27" y="863.90" font-size="15.75" font-weight="bold" fill="#000" textLength="152.03" lengthAdjust="spacingAndGlyphs" >192.168.2.100/24</text>
<text x="994.57" y="920.20" font-size="15.75" font-weight="bold" fill="#0a2cff" textLength="130.74" lengthAdjust="spacingAndGlyphs" >192.168.2.0/24</text>
<rect x="1164.5" y="78.5" width="15" height="877" fill="#e3e3e3" stroke="#bdbdbd"/>
<rect x="1164.5" y="78.5" width="15" height="15" fill="url(#gHandleV)" stroke="#bdbdbd"/>
<path d="M1167,88 L1171.5,83 L1176,88z" fill="#5a5a5a"/>
<rect x="1164.5" y="143.5" width="15" height="719" fill="url(#gHandleV)" stroke="#bdbdbd"/>
<rect x="1164.5" y="941.5" width="15" height="14.5" fill="url(#gHandleV)" stroke="#bdbdbd"/>
<path d="M1167,946 L1171.5,951 L1176,946z" fill="#5a5a5a"/>
<rect x="226.5" y="956.5" width="938" height="15" fill="#e3e3e3" stroke="#bdbdbd"/>
<rect x="226.5" y="956.5" width="15" height="15" fill="url(#gHandleH)" stroke="#bdbdbd"/>
<path d="M236.5,959.5 L231.5,964 L236.5,968.5z" fill="#5a5a5a"/>
<rect x="395.5" y="956.5" width="411" height="15" fill="url(#gHandleH)" stroke="#bdbdbd"/>
<rect x="1149.5" y="956.5" width="15" height="15" fill="url(#gHandleH)" stroke="#bdbdbd"/>
<path d="M1154,959.5 L1159.3,964 L1154,968.5z" fill="#5a5a5a"/>
<rect x="1164.5" y="956.5" width="15" height="15" fill="#efefef" stroke="#bdbdbd"/>
<text x="112.27" y="143.90" font-size="14.9" font-weight="normal" fill="#000" textLength="78.33" lengthAdjust="spacingAndGlyphs" >ATM switch</text>
<text x="111.38" y="176.00" font-size="14.9" font-weight="normal" fill="#000" textLength="91.99" lengthAdjust="spacingAndGlyphs" >Ethernet hub</text>
<text x="111.37" y="207.70" font-size="14.9" font-weight="normal" fill="#fff" textLength="102.40" lengthAdjust="spacingAndGlyphs" >Ethernet swi...</text>
<text x="111.41" y="239.70" font-size="14.9" font-weight="normal" fill="#000" textLength="101.72" lengthAdjust="spacingAndGlyphs" >Frame Relay...</text>
<text x="111.52" y="271.80" font-size="14.9" font-weight="normal" fill="#000" textLength="54.18" lengthAdjust="spacingAndGlyphs" >FRR-7.5</text>
<use href="#frr" transform="translate(74.8,251) scale(0.53)"/>
<path d="M84.5,958.5 h17.5 M93.2,950.8 v18" stroke="#000" stroke-width="3.6"/>
<text x="103.17" y="965.30" font-size="14.9" font-weight="normal" fill="#000" textLength="98.84" lengthAdjust="spacingAndGlyphs" >New template</text>
<text x="1189.65" y="92.00" font-size="14.9" font-weight="normal" fill="#000" textLength="133.48" lengthAdjust="spacingAndGlyphs" >Topology Summary</text>
<rect x="1476.5" y="82.5" width="10" height="10" rx="2" fill="none" stroke="#7a7a7a" stroke-width="0.9"/>
<rect x="1479" y="86.5" width="4" height="4" fill="none" stroke="#6a6a6a" stroke-width="0.9"/>
<path d="M1480.5,86.5 v-2 h4 v4 h-1.5" fill="none" stroke="#6a6a6a" stroke-width="0.9"/>
<rect x="1490.5" y="82.5" width="10" height="10" rx="2" fill="none" stroke="#7a7a7a" stroke-width="0.9"/>
<path d="M1493,85 l5,5 M1498,85 l-5,5" stroke="#444" stroke-width="1.8"/>
<rect x="1186.5" y="97.5" width="317" height="474" fill="#fff" stroke="#b4b4b4"/>
<rect x="1187" y="98" width="316" height="20" fill="url(#gHdr)"/>
<rect x="1187" y="118" width="316" height="1" fill="#b8b8b8"/>
<rect x="1294" y="98" width="1" height="20" fill="#cfcfcf"/>
<text x="1188.42" y="112.80" font-size="14.9" font-weight="normal" fill="#000" textLength="37.27" lengthAdjust="spacingAndGlyphs" >Node</text>
<text x="1296.83" y="112.80" font-size="14.9" font-weight="normal" fill="#000" textLength="55.54" lengthAdjust="spacingAndGlyphs" >Console</text>
<path d="M1195.3,124.3 L1200.2,128.6 L1195.3,132.9z" fill="#5a5a5a"/>
<circle cx="1221" cy="128.6" r="8.9" fill="#e0e0e0"/>
<circle cx="1221" cy="128.6" r="7.9" fill="#b4b4b4"/>
<circle cx="1221" cy="128.6" r="6.6" fill="url(#gLed2)"/>
<ellipse cx="1221" cy="126.3" rx="5" ry="3.4" fill="url(#gLedHi)"/>
<text x="1235.73" y="133.60" font-size="14.9" font-weight="normal" fill="#000" textLength="14.31" lengthAdjust="spacingAndGlyphs" >r1</text>
<text x="1298.06" y="133.60" font-size="14.9" font-weight="normal" fill="#000" textLength="147.62" lengthAdjust="spacingAndGlyphs" >telnet localhost:5000</text>
<path d="M1195.3,144.29999999999998 L1200.2,148.6 L1195.3,152.9z" fill="#5a5a5a"/>
<circle cx="1221" cy="148.6" r="8.9" fill="#e0e0e0"/>
<circle cx="1221" cy="148.6" r="7.9" fill="#b4b4b4"/>
<circle cx="1221" cy="148.6" r="6.6" fill="url(#gLed2)"/>
<ellipse cx="1221" cy="146.29999999999998" rx="5" ry="3.4" fill="url(#gLedHi)"/>
<text x="1235.73" y="153.60" font-size="14.9" font-weight="normal" fill="#000" textLength="14.31" lengthAdjust="spacingAndGlyphs" >r2</text>
<text x="1298.06" y="153.60" font-size="14.9" font-weight="normal" fill="#000" textLength="147.62" lengthAdjust="spacingAndGlyphs" >telnet localhost:5002</text>
<path d="M1195.3,164.29999999999998 L1200.2,168.6 L1195.3,172.9z" fill="#5a5a5a"/>
<circle cx="1221" cy="168.6" r="8.9" fill="#e0e0e0"/>
<circle cx="1221" cy="168.6" r="7.9" fill="#b4b4b4"/>
<circle cx="1221" cy="168.6" r="6.6" fill="url(#gLed2)"/>
<ellipse cx="1221" cy="166.29999999999998" rx="5" ry="3.4" fill="url(#gLedHi)"/>
<text x="1235.73" y="173.60" font-size="14.9" font-weight="normal" fill="#000" textLength="14.31" lengthAdjust="spacingAndGlyphs" >r3</text>
<text x="1298.06" y="173.60" font-size="14.9" font-weight="normal" fill="#000" textLength="147.62" lengthAdjust="spacingAndGlyphs" >telnet localhost:5004</text>
<path d="M1195.3,184.29999999999998 L1200.2,188.6 L1195.3,192.9z" fill="#5a5a5a"/>
<circle cx="1221" cy="188.6" r="8.9" fill="#e0e0e0"/>
<circle cx="1221" cy="188.6" r="7.9" fill="#b4b4b4"/>
<circle cx="1221" cy="188.6" r="6.6" fill="url(#gLed2)"/>
<ellipse cx="1221" cy="186.29999999999998" rx="5" ry="3.4" fill="url(#gLedHi)"/>
<text x="1235.73" y="193.60" font-size="14.9" font-weight="normal" fill="#000" textLength="14.31" lengthAdjust="spacingAndGlyphs" >r4</text>
<text x="1298.06" y="193.60" font-size="14.9" font-weight="normal" fill="#000" textLength="147.62" lengthAdjust="spacingAndGlyphs" >telnet localhost:5006</text>
<path d="M1195.3,204.29999999999998 L1200.2,208.6 L1195.3,212.9z" fill="#5a5a5a"/>
<circle cx="1221" cy="208.6" r="8.9" fill="#e0e0e0"/>
<circle cx="1221" cy="208.6" r="7.9" fill="#b4b4b4"/>
<circle cx="1221" cy="208.6" r="6.6" fill="url(#gLed2)"/>
<ellipse cx="1221" cy="206.29999999999998" rx="5" ry="3.4" fill="url(#gLedHi)"/>
<text x="1236.07" y="213.60" font-size="14.9" font-weight="normal" fill="#000" textLength="56.35" lengthAdjust="spacingAndGlyphs" >Switch1</text>
<text x="1297.23" y="213.60" font-size="14.9" font-weight="normal" fill="#000" textLength="35.80" lengthAdjust="spacingAndGlyphs" >none</text>
<path d="M1195.3,224.29999999999998 L1200.2,228.6 L1195.3,232.9z" fill="#5a5a5a"/>
<circle cx="1221" cy="228.6" r="8.9" fill="#e0e0e0"/>
<circle cx="1221" cy="228.6" r="7.9" fill="#b4b4b4"/>
<circle cx="1221" cy="228.6" r="6.6" fill="url(#gLed2)"/>
<ellipse cx="1221" cy="226.29999999999998" rx="5" ry="3.4" fill="url(#gLedHi)"/>
<text x="1236.07" y="233.60" font-size="14.9" font-weight="normal" fill="#000" textLength="56.35" lengthAdjust="spacingAndGlyphs" >Switch2</text>
<text x="1297.23" y="233.60" font-size="14.9" font-weight="normal" fill="#000" textLength="35.80" lengthAdjust="spacingAndGlyphs" >none</text>
<path d="M1195.3,244.29999999999998 L1200.2,248.6 L1195.3,252.9z" fill="#5a5a5a"/>
<circle cx="1221" cy="248.6" r="8.9" fill="#e0e0e0"/>
<circle cx="1221" cy="248.6" r="7.9" fill="#b4b4b4"/>
<circle cx="1221" cy="248.6" r="6.6" fill="url(#gLed2)"/>
<ellipse cx="1221" cy="246.29999999999998" rx="5" ry="3.4" fill="url(#gLedHi)"/>
<text x="1236.56" y="253.60" font-size="14.9" font-weight="normal" fill="#000" textLength="53.69" lengthAdjust="spacingAndGlyphs" >tenant1</text>
<text x="1298.06" y="253.60" font-size="14.9" font-weight="normal" fill="#000" textLength="147.62" lengthAdjust="spacingAndGlyphs" >telnet localhost:5008</text>
<path d="M1195.3,264.3 L1200.2,268.6 L1195.3,272.90000000000003z" fill="#5a5a5a"/>
<circle cx="1221" cy="268.6" r="8.9" fill="#e0e0e0"/>
<circle cx="1221" cy="268.6" r="7.9" fill="#b4b4b4"/>
<circle cx="1221" cy="268.6" r="6.6" fill="url(#gLed2)"/>
<ellipse cx="1221" cy="266.3" rx="5" ry="3.4" fill="url(#gLedHi)"/>
<text x="1236.56" y="273.60" font-size="14.9" font-weight="normal" fill="#000" textLength="53.69" lengthAdjust="spacingAndGlyphs" >tenant2</text>
<text x="1298.06" y="273.60" font-size="14.9" font-weight="normal" fill="#000" textLength="147.62" lengthAdjust="spacingAndGlyphs" >telnet localhost:5010</text>
<rect x="1338" y="574" width="1" height="1" fill="#a8a8a8"/>
<rect x="1341" y="574" width="1" height="1" fill="#a8a8a8"/>
<rect x="1344" y="574" width="1" height="1" fill="#a8a8a8"/>
<rect x="1347" y="574" width="1" height="1" fill="#a8a8a8"/>
<rect x="1350" y="574" width="1" height="1" fill="#a8a8a8"/>
<rect x="1353" y="574" width="1" height="1" fill="#a8a8a8"/>
<text x="1189.79" y="591.60" font-size="14.9" font-weight="normal" fill="#000" textLength="124.64" lengthAdjust="spacingAndGlyphs" >Servers Summary</text>
<rect x="1476.5" y="582.5" width="10" height="10" rx="2" fill="none" stroke="#7a7a7a" stroke-width="0.9"/>
<rect x="1479" y="586.5" width="4" height="4" fill="none" stroke="#6a6a6a" stroke-width="0.9"/>
<path d="M1480.5,586.5 v-2 h4 v4 h-1.5" fill="none" stroke="#6a6a6a" stroke-width="0.9"/>
<rect x="1490.5" y="582.5" width="10" height="10" rx="2" fill="none" stroke="#7a7a7a" stroke-width="0.9"/>
<path d="M1493,585 l5,5 M1498,585 l-5,5" stroke="#444" stroke-width="1.8"/>
<rect x="1186.5" y="597.5" width="317" height="374" fill="#fff" stroke="#b4b4b4"/>
<path d="M1195.3,603.6 L1200.2,607.9 L1195.3,612.1999999999999z" fill="#5a5a5a"/>
<circle cx="1221" cy="607.9" r="8.9" fill="#e0e0e0"/>
<circle cx="1221" cy="607.9" r="7.9" fill="#b4b4b4"/>
<circle cx="1221" cy="607.9" r="6.6" fill="url(#gLed2)"/>
<ellipse cx="1221" cy="605.6" rx="5" ry="3.4" fill="url(#gLedHi)"/>
<text x="1235.77" y="612.60" font-size="14.9" font-weight="normal" fill="#000" textLength="245.58" lengthAdjust="spacingAndGlyphs" >kvm-gentoo CPU 3.7%, RAM 31.7%</text>
<rect x="223" y="518" width="1" height="1" fill="#a0a0a0"/>
<rect x="223" y="521" width="1" height="1" fill="#a0a0a0"/>
<rect x="223" y="524" width="1" height="1" fill="#a0a0a0"/>
<rect x="223" y="527" width="1" height="1" fill="#a0a0a0"/>
<rect x="223" y="530" width="1" height="1" fill="#a0a0a0"/>
<rect x="223" y="533" width="1" height="1" fill="#a0a0a0"/>
<rect x="1183" y="518" width="1" height="1" fill="#a0a0a0"/>
<rect x="1183" y="521" width="1" height="1" fill="#a0a0a0"/>
<rect x="1183" y="524" width="1" height="1" fill="#a0a0a0"/>
<rect x="1183" y="527" width="1" height="1" fill="#a0a0a0"/>
<rect x="1183" y="530" width="1" height="1" fill="#a0a0a0"/>
<rect x="1183" y="533" width="1" height="1" fill="#a0a0a0"/>
<path d="M1388,980.5 L1396,994 H1380z" fill="#fff" stroke="#d42a2a" stroke-width="1.8" stroke-linejoin="round"/>
<rect x="1387.2" y="984.5" width="1.6" height="5" fill="#222"/>
<rect x="1387.2" y="990.5" width="1.6" height="1.6" fill="#222"/>
<text x="1403.47" y="992.10" font-size="14.9" font-weight="normal" fill="#000" textLength="69.87" lengthAdjust="spacingAndGlyphs" >1 warning</text>
<rect x="1501" y="989" width="1" height="1" fill="#b0b0b0"/>
<rect x="1498" y="992" width="1" height="1" fill="#b0b0b0"/>
<rect x="1501" y="992" width="1" height="1" fill="#b0b0b0"/>
<rect x="1495" y="995" width="1" height="1" fill="#b0b0b0"/>
<rect x="1498" y="995" width="1" height="1" fill="#b0b0b0"/>
<rect x="1501" y="995" width="1" height="1" fill="#b0b0b0"/>
<rect x="1492" y="998" width="1" height="1" fill="#b0b0b0"/>
<rect x="1495" y="998" width="1" height="1" fill="#b0b0b0"/>
<rect x="1498" y="998" width="1" height="1" fill="#b0b0b0"/>
<rect x="1501" y="998" width="1" height="1" fill="#b0b0b0"/>
<rect x="6" y="1000" width="1497" height="1" fill="#fff"/>
<rect x="5" y="8" width="1499" height="994" fill="none" stroke="#000" stroke-width="2"/>
</svg></body></html>
